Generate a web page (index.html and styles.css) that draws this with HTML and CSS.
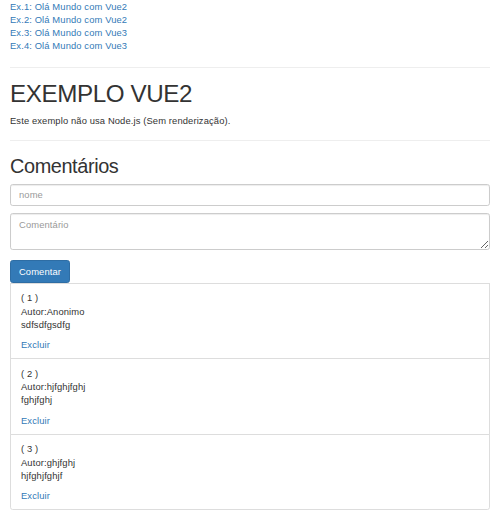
FILE: index.html
```html
<!DOCTYPE html>
<html lang="pt-BR">
<head>
<meta charset="utf-8">
<title>Exemplo Vue2</title>
<link rel="stylesheet" href="styles.css">
</head>
<body>
<div class="container">
  <div class="links">
    <a href="#">Ex.1: Olá Mundo com Vue2</a>
    <a href="#">Ex.2: Olá Mundo com Vue2</a>
    <a href="#">Ex.3: Olá Mundo com Vue3</a>
    <a href="#">Ex.4: Olá Mundo com Vue3</a>
  </div>
  <hr class="sep sep-top">
  <h1 class="title">EXEMPLO VUE2</h1>
  <p class="lead-text">Este exemplo não usa Node.js (Sem renderização).</p>
  <hr class="sep sep-mid">
  <h2 class="subtitle">Comentários</h2>
  <form class="comment-form">
    <input class="field field-input" type="text" placeholder="nome">
    <textarea class="field field-area" rows="2" placeholder="Comentário"></textarea>
    <button class="btn-primary" type="button">Comentar</button>
  </form>
  <ul class="list-group">
    <li class="list-item">
      <p class="item-text">( 1 )<br>Autor:Anonimo<br>sdfsdfgsdfg</p>
      <a class="item-link" href="#">Excluir</a>
    </li>
    <li class="list-item">
      <p class="item-text">( 2 )<br>Autor:hjfghjfghj<br>fghjfghj</p>
      <a class="item-link" href="#">Excluir</a>
    </li>
    <li class="list-item">
      <p class="item-text">( 3 )<br>Autor:ghjfghj<br>hjfghjfghjf</p>
      <a class="item-link" href="#">Excluir</a>
    </li>
  </ul>
</div>
</body>
</html>
```

FILE: styles.css
```css
* { box-sizing: border-box; }
html, body {
  margin: 0;
  padding: 0;
  background: #fff;
}
body {
  font-family: "Liberation Sans", Arial, Helvetica, sans-serif;
  font-size: 9.4px;
  line-height: 13.4px;
  letter-spacing: 0.12px;
  color: #333;
}
.container {
  padding: 0 10px;
}
a {
  color: #337ab7;
  text-decoration: none;
}
.links {
  display: flex;
  flex-direction: column;
  line-height: 13px;
}
.sep {
  border: 0;
  border-top: 1px solid #eee;
  height: 0;
  margin: 0;
}
.sep-top { margin-top: 15px; }
.sep-mid { margin-top: 12.6px; }
.title {
  font-size: 24.2px;
  line-height: 27px;
  font-weight: 500;
  letter-spacing: -0.4px;
  margin: 12px 0 7px;
  color: #333;
}
.lead-text {
  margin: 0;
}
.subtitle {
  font-size: 19.9px;
  line-height: 22px;
  font-weight: 500;
  letter-spacing: -0.4px;
  margin: 13.7px 0 7.3px;
  color: #333;
}
.comment-form {
  display: flex;
  flex-direction: column;
  align-items: flex-start;
  margin: 0;
}
.field {
  display: block;
  width: 100%;
  font-family: inherit;
  font-size: 9.4px;
  line-height: 13.4px;
  letter-spacing: 0.12px;
  color: #555;
  background: #fff;
  border: 1px solid #ccc;
  border-radius: 2.7px;
  box-shadow: inset 0 1px 1px rgba(0,0,0,.075);
  padding: 4px 8px;
  margin: 0;
  outline: none;
}
.field::placeholder { color: #999; }
.field-input {
  height: 22px;
  margin-bottom: 7px;
}
.field-area {
  height: 37px;
  margin-bottom: 10px;
  resize: vertical;
}
.btn-primary {
  font-family: inherit;
  font-size: 9.4px;
  line-height: 13.4px;
  letter-spacing: 0.1px;
  height: 23px;
  padding: 4px 8px;
  color: #fff;
  background: #337ab7;
  border: 1px solid #2e6da4;
  border-radius: 2.7px;
  margin: 0;
  cursor: pointer;
}
.list-group {
  list-style: none;
  margin: 0;
  padding: 0;
}
.list-item {
  border: 1px solid #ddd;
  margin-bottom: -1px;
  padding: 7.2px 10px 7px;
  background: #fff;
}
.list-item:last-child {
  margin-bottom: 0;
  border-bottom-left-radius: 2.7px;
  border-bottom-right-radius: 2.7px;
}
.item-text {
  margin: 0 0 6.7px;
}
.item-link {
  display: block;
}
```
